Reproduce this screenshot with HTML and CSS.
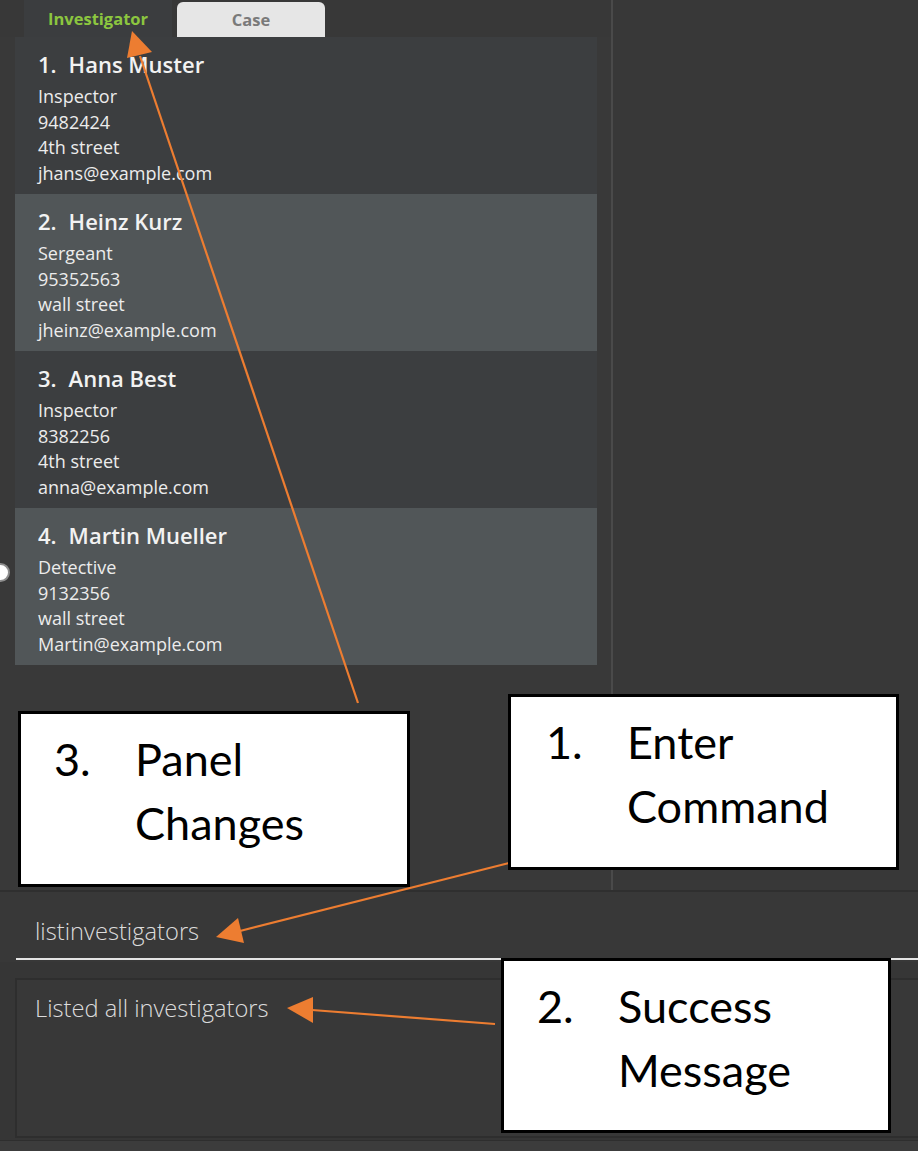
FILE: index.html
```html
<!DOCTYPE html>
<html>
<head>
<meta charset="utf-8">
<link rel="stylesheet" href="styles.css">
</head>
<body>
<div class="app">
  <div class="main">
    <div class="left">
      <div class="tabs">
        <div class="tab active">Investigator</div>
        <div class="tab">Case</div>
      </div>
      <div class="list">
        <div class="card">
          <div class="name"><span class="idx">1.</span>Hans Muster</div>
          <div class="line">Inspector</div>
          <div class="line">9482424</div>
          <div class="line">4th street</div>
          <div class="line">jhans@example.com</div>
        </div>
        <div class="card alt">
          <div class="name"><span class="idx">2.</span>Heinz Kurz</div>
          <div class="line">Sergeant</div>
          <div class="line">95352563</div>
          <div class="line">wall street</div>
          <div class="line">jheinz@example.com</div>
        </div>
        <div class="card">
          <div class="name"><span class="idx">3.</span>Anna Best</div>
          <div class="line">Inspector</div>
          <div class="line">8382256</div>
          <div class="line">4th street</div>
          <div class="line">anna@example.com</div>
        </div>
        <div class="card alt">
          <div class="name"><span class="idx">4.</span>Martin Mueller</div>
          <div class="line">Detective</div>
          <div class="line">9132356</div>
          <div class="line">wall street</div>
          <div class="line">Martin@example.com</div>
        </div>
      </div>
    </div>
    <div class="divider"></div>
    <div class="right"></div>
  </div>
  <div class="command">
    <div class="cmd-field">listinvestigators</div>
  </div>
  <div class="result">
    <div class="result-box">Listed all investigators</div>
  </div>
  <div class="footer"></div>

  <div class="knob"></div>

  <svg class="arrows" width="918" height="1151" viewBox="0 0 918 1151">
    <line x1="358" y1="703" x2="140" y2="56" />
    <polygon points="132,31 127,58 152,52" />
    <line x1="509" y1="863" x2="240" y2="931" />
    <polygon points="216,937 238,918 244,943" />
    <line x1="495" y1="1024" x2="312" y2="1010" />
    <polygon points="287,1008 313,997 313,1023" />
  </svg>

  <div class="note note-panel">
    <span class="num">3.</span><span class="word">Panel</span>
    <span class="num"></span><span class="word">Changes</span>
  </div>
  <div class="note note-enter">
    <span class="num">1.</span><span class="word">Enter</span>
    <span class="num"></span><span class="word">Command</span>
  </div>
  <div class="note note-success">
    <span class="num">2.</span><span class="word">Success</span>
    <span class="num"></span><span class="word">Message</span>
  </div>
</div>
</body>
</html>
```
FILE: styles.css
```css
* { box-sizing: border-box; }
html, body { margin: 0; padding: 0; }
body {
  background: #383838;
  font-family: "Open Sans", "Noto Sans", sans-serif;
  overflow: hidden;
}
.app {
  position: relative;
  width: 918px;
  height: 1151px;
  display: flex;
  flex-direction: column;
  background: #383838;
  overflow: hidden;
}
.main {
  height: 892px;
  display: flex;
  border-bottom: 2px solid #2f2f2f;
}
.left {
  width: 611px;
  background: #393939;
  display: flex;
  flex-direction: column;
}
.tabs {
  height: 37px;
  display: flex;
  align-items: flex-end;
  padding-left: 24px;
  background: #383838;
}
.tab {
  width: 148px;
  height: 35px;
  margin-right: 5px;
  display: flex;
  align-items: center;
  justify-content: center;
  font-size: 16.5px;
  font-weight: 700;
  color: #7a7a7a;
  background: #e6e6e6;
  border-radius: 6px 6px 0 0;
}
.tab.active {
  height: 37px;
  background: #3b3d3f;
  color: #8cc63f;
  border-radius: 0;
}
.list {
  margin-left: 15px;
  width: 582px;
  display: flex;
  flex-direction: column;
}
.card {
  height: 157px;
  padding: 11px 0 0 23px;
  background: #3c3e40;
  color: #ececec;
}
.card.alt { background: #515658; }
.name {
  font-size: 22px;
  font-weight: 600;
  line-height: 32px;
  margin-bottom: 4px;
  color: #f2f2f2;
}
.idx { margin-right: 12px; }
.line {
  font-size: 18px;
  line-height: 25.5px;
}
.divider {
  width: 2px;
  background: #4a4a4a;
}
.right {
  flex: 1;
  background: #383838;
}
.command {
  height: 70px;
  padding: 24px 0 0 16px;
  background: #383838;
}
.cmd-field {
  height: 44px;
  padding-left: 19px;
  font-size: 23.7px;
  font-weight: 300;
  line-height: 30px;
  color: #dcdcdc;
  border-bottom: 2px solid #e4e4e4;
}
.result {
  height: 178px;
  padding: 16px 0 0 15px;
  background: #363636;
}
.result-box {
  height: 160px;
  padding: 13px 0 0 18px;
  border: 2px solid #2e2e2e;
  border-right: none;
  background: #383838;
  font-size: 23.7px;
  font-weight: 300;
  line-height: 30px;
  color: #dcdcdc;
}
.footer {
  flex: 1;
  background: #3c3c3c;
  border-top: 1px solid #2e2e2e;
}
.knob {
  position: absolute;
  left: -9px;
  top: 563px;
  width: 19px;
  height: 19px;
  border-radius: 50%;
  background: #ffffff;
  border: 2px solid #8e8e8e;
}
.arrows {
  position: absolute;
  left: 0;
  top: 0;
}
.arrows line {
  stroke: #ed7d31;
  stroke-width: 2.2;
}
.arrows polygon { fill: #ed7d31; }
.note {
  position: absolute;
  background: #ffffff;
  border: 3px solid #000000;
  display: grid;
  grid-template-columns: 81px auto;
  align-content: start;
  padding: 13px 0 0 33px;
  font-family: "Lato", "Open Sans", sans-serif;
  font-size: 45px;
  line-height: 64px;
  color: #000;
}
.note-panel { left: 18px; top: 711px; width: 392px; height: 176px; padding-left: 33px; }
.note-enter { left: 508px; top: 694px; width: 391px; height: 176px; padding-left: 35px; grid-template-columns: 81px auto; }
.note-success { left: 501px; top: 958px; width: 390px; height: 175px; padding-left: 33px; grid-template-columns: 81px auto; }
```
